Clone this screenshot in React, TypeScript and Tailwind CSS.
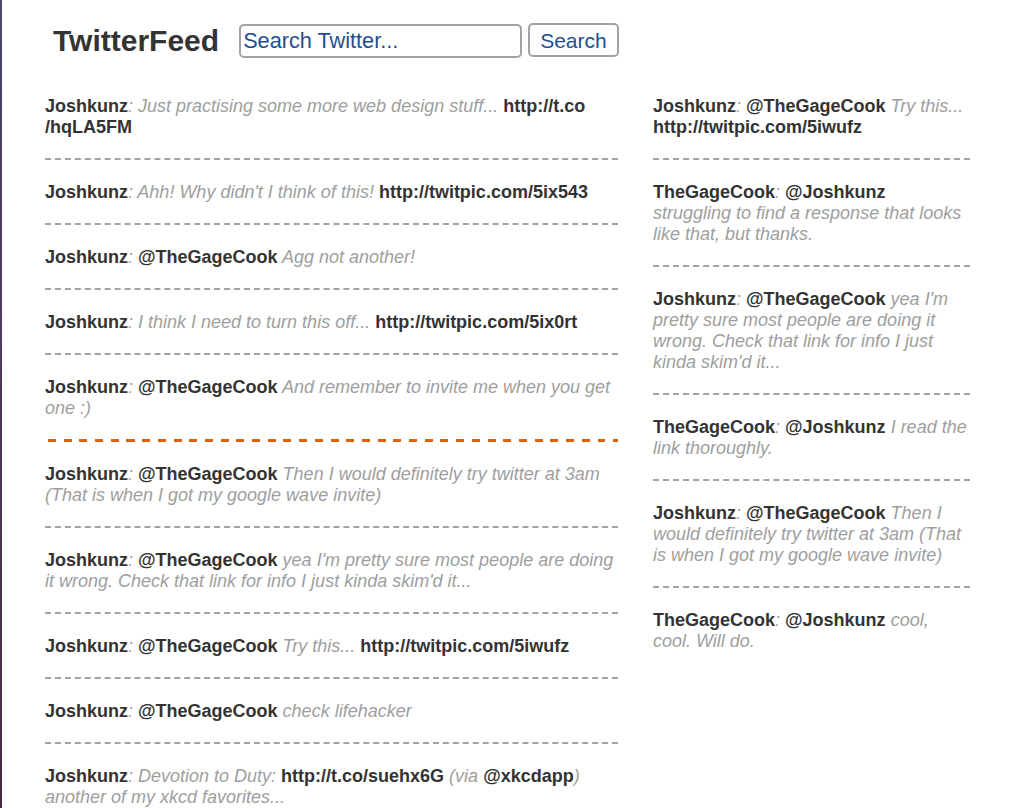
import React from "react";

type Seg = { t: string; k: "b" | "i" };

const B = (t: string): Seg => ({ t, k: "b" });
const I = (t: string): Seg => ({ t, k: "i" });

type Tweet = { segs: (Seg | "wbr")[]; orange?: boolean };

const left: Tweet[] = [
  { segs: [B("Joshkunz"), I(": Just practising some more web design stuff... "), B("http://t.co"), "wbr", B("/hqLA5FM")] },
  { segs: [B("Joshkunz"), I(": Ahh! Why didn't I think of this! "), B("http://twitpic.com/5ix543")] },
  { segs: [B("Joshkunz"), I(": "), B("@TheGageCook"), I(" Agg not another!")] },
  { segs: [B("Joshkunz"), I(": I think I need to turn this off... "), B("http://twitpic.com/5ix0rt")] },
  { segs: [B("Joshkunz"), I(": "), B("@TheGageCook"), I(" And remember to invite me when you get one :)")], orange: true },
  { segs: [B("Joshkunz"), I(": "), B("@TheGageCook"), I(" Then I would definitely try twitter at 3am (That is when I got my google wave invite)")] },
  { segs: [B("Joshkunz"), I(": "), B("@TheGageCook"), I(" yea I'm pretty sure most people are doing it wrong. Check that link for info I just kinda skim'd it...")] },
  { segs: [B("Joshkunz"), I(": "), B("@TheGageCook"), I(" Try this... "), B("http://twitpic.com/5iwufz")] },
  { segs: [B("Joshkunz"), I(": "), B("@TheGageCook"), I(" check lifehacker")] },
  { segs: [B("Joshkunz"), I(": Devotion to Duty: "), B("http://t.co/suehx6G"), I(" (via "), B("@xkcdapp"), I(") another of my xkcd favorites...")] },
];

const right: Tweet[] = [
  { segs: [B("Joshkunz"), I(": "), B("@TheGageCook"), I(" Try this... "), B("http://twitpic.com/5iwufz")] },
  { segs: [B("TheGageCook"), I(": "), B("@Joshkunz"), I(" struggling to find a response that looks like that, but thanks.")] },
  { segs: [B("Joshkunz"), I(": "), B("@TheGageCook"), I(" yea I'm pretty sure most people are doing it wrong. Check that link for info I just kinda skim'd it...")] },
  { segs: [B("TheGageCook"), I(": "), B("@Joshkunz"), I(" I read the link thoroughly.")] },
  { segs: [B("Joshkunz"), I(": "), B("@TheGageCook"), I(" Then I would definitely try twitter at 3am (That is when I got my google wave invite)")] },
  { segs: [B("TheGageCook"), I(": "), B("@Joshkunz"), I(" cool, cool. Will do.")] },
];

function TweetItem({ tw, last, narrow }: { tw: Tweet; last?: boolean; narrow?: boolean }) {
  return (
    <li className="flex flex-col">
      <p className={`pt-[22px] pb-[20px] text-[18px] leading-[21px] ${narrow ? "pr-[3px]" : ""}`}>
        {tw.segs.map((s, i) =>
          s === "wbr" ? (
            <wbr key={i} />
          ) : s.k === "b" ? (
            <span key={i} className="font-bold text-[#333333]">
              {s.t}
            </span>
          ) : (
            <span key={i} className="italic text-[#9e9e9e]">
              {s.t}
            </span>
          )
        )}
      </p>
      {last ? null : tw.orange ? (
        <div className="h-[3px] bg-[repeating-linear-gradient(90deg,transparent_0_3px,#e0600c_3px_11px,transparent_11px_15.7px)]" />
      ) : (
        <div className="border-b-2 border-dashed border-[#a3a3a3]" />
      )}
    </li>
  );
}

export default function App() {
  return (
    <div
      className="flex min-h-[808px] h-[808px] overflow-hidden bg-white"
      style={{ fontFamily: '"Liberation Sans", Arial, sans-serif' }}
    >
      <div className="w-[2px] shrink-0 bg-gradient-to-b from-[#4d4372] to-[#4a2a42]" />
      <div className="flex-1 pl-[43px]">
        <header className="flex items-center pl-[8px] pt-[23px] h-[59px]">
          <h1 className="text-[30px] font-bold text-[#333333] leading-none">TwitterFeed</h1>
          <input
            className="ml-[20px] w-[283px] h-[34px] border-2 border-[#a3a3a3] rounded-[5px] px-[2px] text-[21.7px] text-[#1f4e8f] outline-none bg-white"
            defaultValue="Search Twitter..."
          />
          <button className="ml-[6px] -mt-[2px] h-[34px] px-[10px] border-2 border-[#a3a3a3] rounded-[5px] text-[21px] text-[#1f4e8f] bg-white leading-none">
            Search
          </button>
        </header>
        <div className="mt-[15px] flex gap-[35px] items-start">
          <ul className="w-[573px]">
            {left.map((tw, i) => (
              <TweetItem key={i} tw={tw} />
            ))}
          </ul>
          <ul className="w-[317px]">
            {right.map((tw, i) => (
              <TweetItem key={i} tw={tw} narrow last={i === right.length - 1} />
            ))}
          </ul>
        </div>
      </div>
    </div>
  );
}
